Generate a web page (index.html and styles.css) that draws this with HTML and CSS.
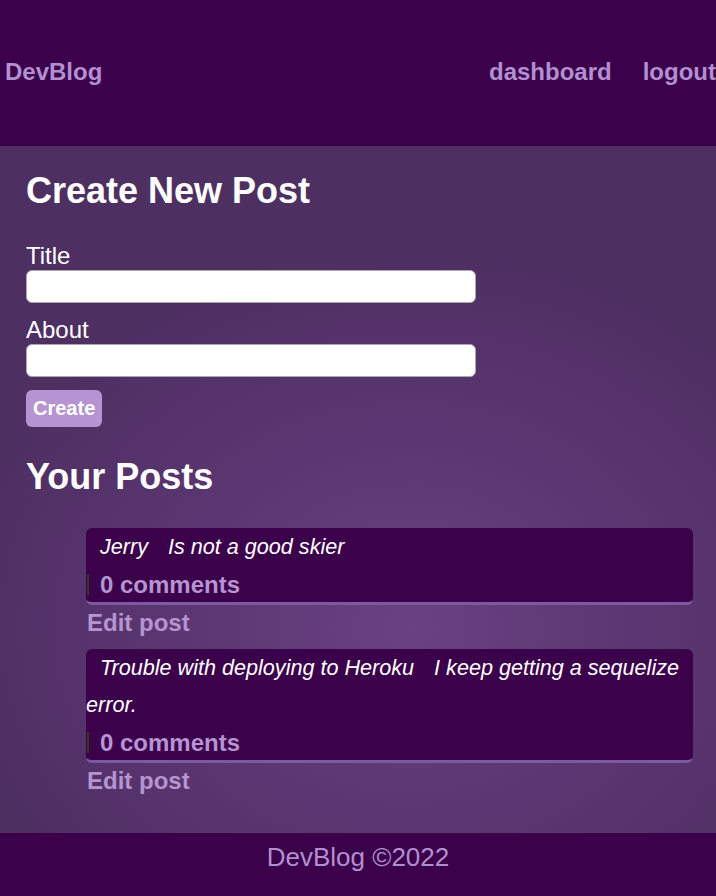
FILE: index.html
```html
<!DOCTYPE html>
<html>
<head>
<meta charset="utf-8">
<title>DevBlog</title>
<link rel="stylesheet" href="styles.css">
</head>
<body>
<header class="site-header">
  <a class="brand" href="#">DevBlog</a>
  <nav class="nav">
    <a href="#">dashboard</a>
    <a href="#">logout</a>
  </nav>
</header>
<main class="main">
  <h1 class="heading">Create New Post</h1>
  <form class="form">
    <label class="label" for="title">Title</label>
    <input class="input" id="title" type="text">
    <label class="label" for="about">About</label>
    <input class="input" id="about" type="text">
    <button class="btn" type="button">Create</button>
  </form>
  <h2 class="heading heading-posts">Your Posts</h2>
  <div class="posts">
    <article class="post">
      <div class="post-body"><span class="post-title">Jerry</span> <span class="post-text">Is not a good skier</span></div>
      <div class="comments"><span class="comments-link">0 comments</span></div>
    </article>
    <a class="edit" href="#">Edit post</a>
    <article class="post">
      <div class="post-body"><span class="post-title">Trouble with deploying to Heroku</span> <span class="post-text">I keep getting a sequelize error.</span></div>
      <div class="comments"><span class="comments-link">0 comments</span></div>
    </article>
    <a class="edit" href="#">Edit post</a>
  </div>
</main>
<footer class="site-footer">DevBlog ©2022</footer>
</body>
</html>
```
FILE: styles.css
```css
* { box-sizing: border-box; }
html, body { margin: 0; padding: 0; }
body {
  font-family: "Liberation Sans", Arial, sans-serif;
  min-height: 100vh;
  display: flex;
  flex-direction: column;
  background: #3b014b;
}
a { text-decoration: none; }
.site-header {
  height: 146px;
  background: #3b014b;
  display: flex;
  justify-content: space-between;
  align-items: center;
  padding: 0 0 2px 5px;
}
.brand, .nav a {
  color: #b28fd0;
  font-weight: bold;
  font-size: 24px;
}
.nav { display: flex; gap: 31px; }
.main {
  flex: 1;
  padding: 24px 23px 12px 26px;
  background: radial-gradient(ellipse 460px 380px at 410px 480px, #6a4181 0%, #5d3774 45%, #4e2f62 100%);
}
.heading {
  margin: 0;
  color: #fff;
  font-size: 36px;
  font-weight: bold;
  line-height: 41px;
}
.form {
  margin-top: 31px;
  display: flex;
  flex-direction: column;
  align-items: flex-start;
}
.label {
  color: #fff;
  font-size: 24px;
  line-height: 28px;
}
.input {
  width: 450px;
  height: 33px;
  border: 1px solid #a9a9a9;
  border-radius: 6px;
  background: #fff;
  margin: 0 0 13px 0;
}
.btn {
  height: 37px;
  padding: 0 7px;
  border: none;
  border-radius: 6px;
  background: #b594d1;
  color: #fff;
  font-family: "Liberation Sans", Arial, sans-serif;
  font-weight: bold;
  font-size: 20px;
}
.heading-posts { margin-top: 29px; }
.posts {
  margin: 31px 0 0 60px;
  display: flex;
  flex-direction: column;
  align-items: flex-start;
}
.post {
  width: 100%;
  background: #3b014b;
  border-radius: 6px;
  border-bottom: 3px solid #7c5aa1;
}
.post-body {
  color: #fff;
  font-style: italic;
  font-size: 21.6px;
  line-height: 37px;
}
.post-title { margin-left: 14px; margin-right: 14px; }
.comments {
  line-height: 37px;
  padding-left: 1px;
}
.comments-link {
  display: inline-block;
  vertical-align: middle;
  border-left: 2px solid #33381f;
  padding-left: 11px;
  color: #b694d1;
  font-weight: bold;
  font-size: 24px;
  line-height: 21px;
}
.edit {
  margin: 4px 0 12px 1px;
  color: #b694d1;
  font-weight: bold;
  font-size: 24px;
  line-height: 28px;
}
.edit:last-child { margin-bottom: 0; }
.site-footer {
  height: 63px;
  background: #3b014b;
  color: #b28fd0;
  font-size: 26px;
  line-height: 30px;
  text-align: center;
  padding-top: 9px;
}
```
